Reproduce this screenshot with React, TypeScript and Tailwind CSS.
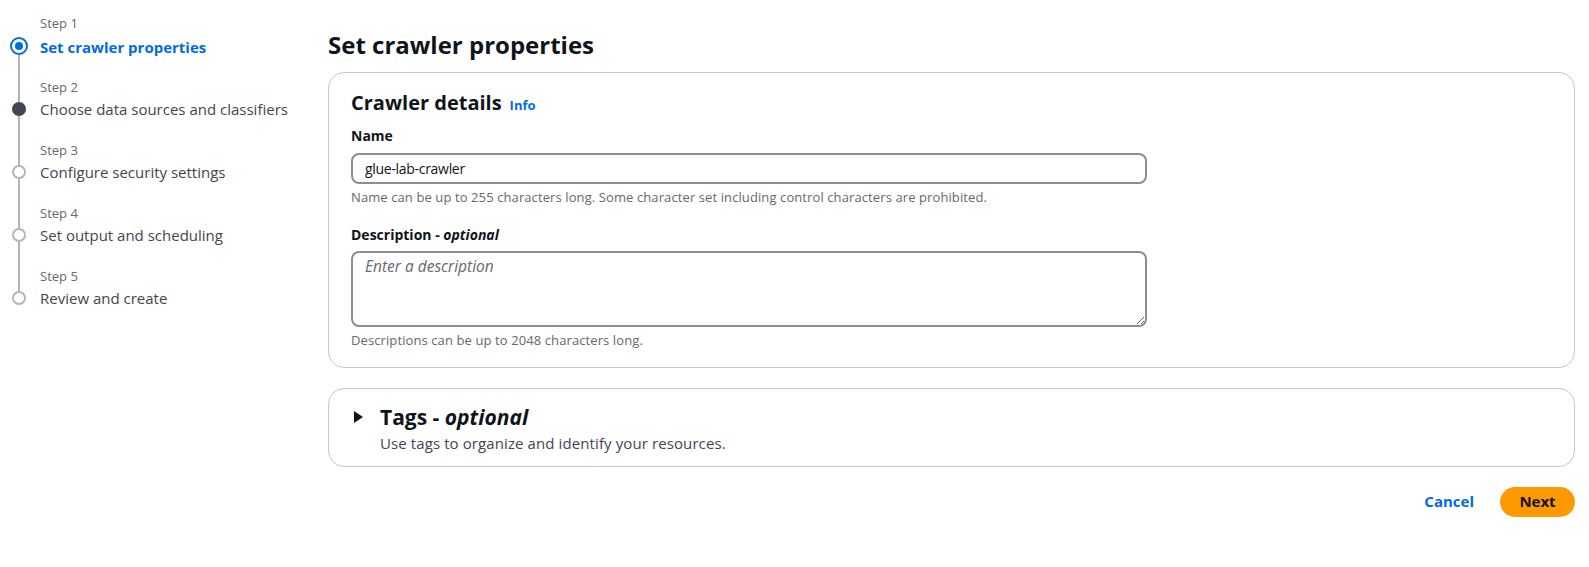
import React from "react";

const steps = [
  { n: 1, label: "Set crawler properties", state: "active" },
  { n: 2, label: "Choose data sources and classifiers", state: "next" },
  { n: 3, label: "Configure security settings", state: "off" },
  { n: 4, label: "Set output and scheduling", state: "off" },
  { n: 5, label: "Review and create", state: "off" },
];

function StepIcon({ state }: { state: string }) {
  if (state === "active") {
    return (
      <div className="w-[18px] h-[18px] rounded-full border-[2.5px] border-[#006ce0] flex items-center justify-center bg-white">
        <div className="w-[8px] h-[8px] rounded-full bg-[#006ce0]" />
      </div>
    );
  }
  if (state === "next") {
    return <div className="w-[14px] h-[14px] rounded-full bg-[#424650]" />;
  }
  return <div className="w-[14px] h-[14px] rounded-full border-2 border-[#b4b4bb] bg-white" />;
}

export default function App() {
  return (
    <div className="flex w-[1589px] h-[567px] bg-white font-['Open_Sans',sans-serif] text-[#0f141a]">
      <nav className="w-[328px] shrink-0 pl-[10px] pt-[16px]">
        {steps.map((s, i) => (
          <div key={s.n} className="flex h-[63px]">
            <div className="w-[18px] flex flex-col items-center">
              <div
                className={`w-[2px] ${s.state === "active" ? "h-[20.5px]" : "h-[22.5px]"} ${
                  i === 0 ? "bg-transparent" : "bg-[#b4b4bb]"
                }`}
              />
              <StepIcon state={s.state} />
              <div className={`w-[2px] flex-1 ${i === steps.length - 1 ? "bg-transparent" : "bg-[#b4b4bb]"}`} />
            </div>
            <div className="ml-[12px]">
              <div className={`text-[13px] leading-[16px] text-[#656871] ${i === 0 ? "-mt-[1px]" : ""}`}>
                Step {s.n}
              </div>
              <div
                className={`text-[15px] leading-[20px] ${
                  s.state === "active" ? "mt-[5.5px] font-bold text-[#006ce0]" : "mt-[3.5px] text-[#424650]"
                }`}
              >
                {s.label}
              </div>
            </div>
          </div>
        ))}
      </nav>

      <main className="flex-1 pr-[14px] pt-[29px]">
        <h1 className="text-[24px] leading-[32px] font-bold mb-[11px]">Set crawler properties</h1>

        <section className="border border-[#c6c6cd] rounded-2xl pl-[22px] pr-[20px] pt-[18px] pb-[19px]">
          <div className="flex items-baseline gap-[8px]">
            <h2 className="text-[20px] leading-[24px] font-bold">Crawler details</h2>
            <span className="text-[13px] font-bold text-[#006ce0]">Info</span>
          </div>

          <div className="mt-[11px] text-[14px] leading-[18px] font-bold">Name</div>
          <input
            readOnly
            value="glue-lab-crawler"
            className="mt-[8px] block w-[796px] h-[31px] border-2 border-[#8c8c94] rounded-lg px-[12px] text-[14px] tracking-[-0.3px] text-[#0f141a] outline-none"
          />
          <div className="mt-[5px] text-[13px] leading-[16px] tracking-[0.1px] text-[#656871]">
            Name can be up to 255 characters long. Some character set including control characters are prohibited.
          </div>

          <div className="mt-[21px] text-[14px] leading-[18px] font-bold">
            Description - <i>optional</i>
          </div>
          <textarea
            placeholder="Enter a description"
            className="mt-[7px] block w-[796px] h-[76px] border-2 border-[#8c8c94] rounded-lg px-[12px] py-[3px] text-[15.5px] leading-[20px] outline-none placeholder:italic placeholder:text-[#656871]"
          />
          <div className="mt-[5px] text-[13px] leading-[16px] tracking-[0.1px] text-[#656871]">
            Descriptions can be up to 2048 characters long.
          </div>
        </section>

        <section className="mt-[20px] border border-[#c6c6cd] rounded-2xl pl-[25px] pr-[20px] pt-[16px] pb-[14px]">
          <div className="flex items-center">
            <svg width="9" height="12" viewBox="0 0 9 12" className="mr-[17px]">
              <path d="M0 0 L9 6 L0 12 Z" fill="#0f141a" />
            </svg>
            <h2 className="text-[21px] leading-[24px] font-bold">
              Tags - <i>optional</i>
            </h2>
          </div>
          <div className="ml-[26px] mt-[5px] text-[15px] leading-[18px] tracking-[0.1px] text-[#424650]">
            Use tags to organize and identify your resources.
          </div>
        </section>

        <div className="mt-[20px] flex justify-end items-center gap-[6px]">
          <button className="h-[30px] px-[20px] text-[15px] font-bold text-[#006ce0]">Cancel</button>
          <button className="h-[30px] w-[75px] rounded-full bg-[#ff9900] text-[15px] font-bold text-[#0f141a]">
            Next
          </button>
        </div>
      </main>
    </div>
  );
}
